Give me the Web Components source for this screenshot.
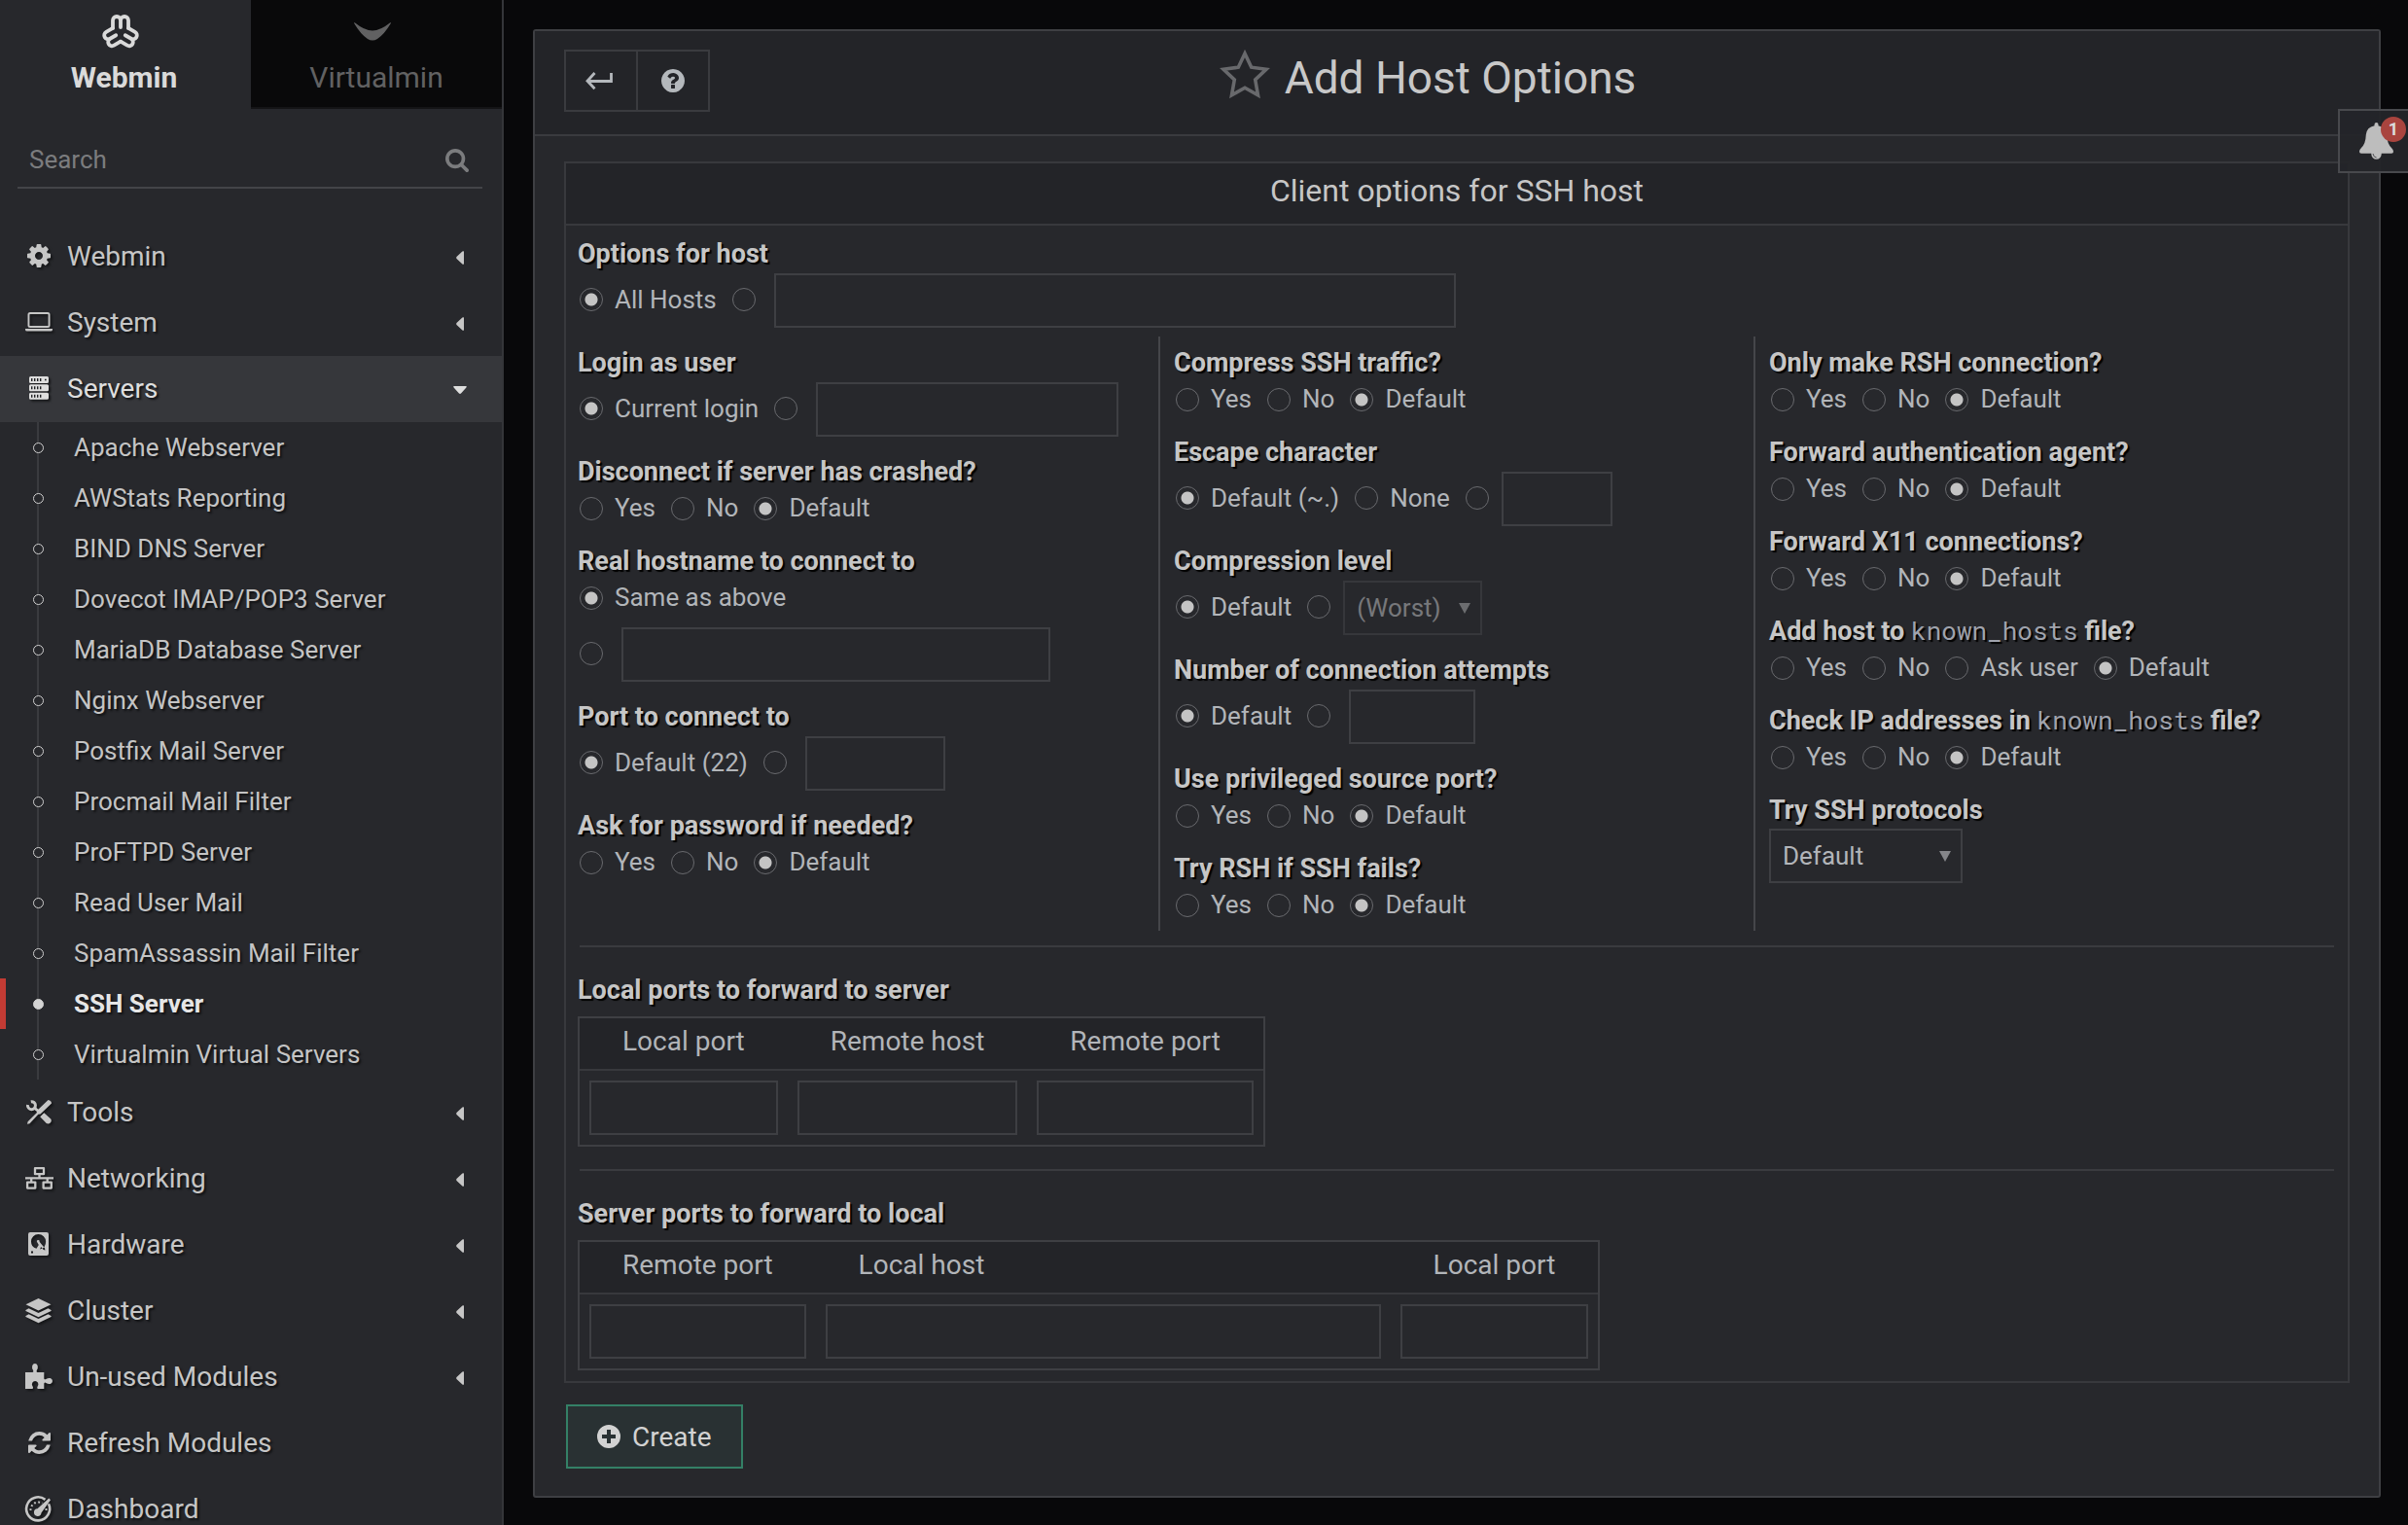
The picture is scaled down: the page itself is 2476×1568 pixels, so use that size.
<!DOCTYPE html>
<html lang="en">
<head>
<meta charset="utf-8">
<title>Add Host Options</title>
<style>
  html, body { margin: 0; height: 100%; background: #08080a; }
  body { font: 26px/37px Roboto, "Liberation Sans", sans-serif; color: #b2b5b9; }
</style>
</head>
<body>
<wm-app></wm-app>
<script>
const ICONS = {
  webmin: ['-18 -18.5 36 34', '<g fill="none" stroke="currentColor" stroke-width="3.8" stroke-linecap="round" stroke-linejoin="round"><path d="M-8-4.600V-12.500a4 4 0 0 1 8 0V-5.500M0-12.500a4 4 0 0 1 8 0V-4.600"/><path transform="rotate(120)" d="M-8-4.600V-12.500a4 4 0 0 1 8 0V-5.500M0-12.500a4 4 0 0 1 8 0V-4.600"/><path transform="rotate(-120)" d="M-8-4.600V-12.500a4 4 0 0 1 8 0V-5.500M0-12.500a4 4 0 0 1 8 0V-4.600"/></g>'],
  virtualmin: ['0 0 38 20', '<path d="M.4 0Q11 9 19 9T37.600 0Q38 .3 37.700 1.200 31 13 24 17.800 19 21 14 17.800 7 13 .3 1.200 0 .3.4 0z"/>'],
  search: ['64 128 1664 1664', '<path d="M1216 832q0-185-131.5-316.5t-316.5-131.5-316.5 131.5-131.5 316.5 131.5 316.5 316.5 131.5 316.5-131.5 131.5-316.5zm512 832q0 52-38 90t-90 38q-54 0-90-38l-343-342q-179 124-399 124-143 0-273.5-55.5t-225-150-150-225-55.5-273.5 55.5-273.5 150-225 225-150 273.5-55.5 273.5 55.5 225 150 150 225 55.5 273.5q0 220-124 399l343 343q37 37 37 90z"/>'],
  cog: ['0 128 1536 1536', '<path d="M1024 896q0-106-75-181t-181-75-181 75-75 181 75 181 181 75 181-75 75-181zm512-109v222q0 12-8 23t-20 13l-185 28q-19 54-39 91 35 50 107 138 10 12 10 25t-9 23q-27 37-99 108t-94 71q-12 0-26-9l-138-108q-44 23-91 38-16 136-29 186-7 28-36 28h-222q-14 0-24.5-8.5t-11.5-21.5l-28-184q-49-16-90-37l-141 107q-10 9-25 9-14 0-25-11-126-114-165-168-7-10-7-23 0-12 8-23 15-21 51-66.5t54-70.5q-27-50-41-99l-183-27q-13-2-21-12.5t-8-23.5v-222q0-12 8-23t19-13l186-28q14-46 39-92-40-57-107-138-10-12-10-24 0-10 9-23 26-36 98.500-107.500t94.500-71.500q13 0 26 10l138 107q44-23 91-38 16-136 29-186 7-28 36-28h222q14 0 24.500 8.500t11.500 21.500l28 184q49 16 90 37l142-107q9-9 24-9 13 0 25 10 129 119 165 170 7 8 7 22 0 12-8 23-15 21-51 66.500t-54 70.500q26 50 41 98l183 28q13 2 21 12.500t8 23.500z"/>'],
  laptop: ['0 0 28 20', '<path fill-rule="evenodd" d="M5 0h18a2.500 2.500 0 0 1 2.500 2.500v11a2.500 2.500 0 0 1-2.500 2.500H5a2.500 2.500 0 0 1-2.500-2.500v-11A2.500 2.500 0 0 1 5 0zm0 2a.6.6 0 0 0-.6.6v10.800a.6.6 0 0 0 .6.6h18a.6.6 0 0 0 .6-.6V2.600A.6.6 0 0 0 23 2zM0 17h28v1q0 1.500-2 1.500H2Q0 19.500 0 18z"/>'],
  server: ['0 0 20 24', '<path fill-rule="evenodd" d="M1.500 0h17A1.500 1.500 0 0 1 20 1.500v4A1.500 1.500 0 0 1 18.500 7h-17A1.500 1.500 0 0 1 0 5.500v-4A1.500 1.500 0 0 1 1.500 0zm.500 2v3h1.400V2zm3 0v3h1.400V2zm3 0v3h1.400V2zm3 0v3h1.400V2zm5 .800v1.400h1.600V2.800zM1.500 8.300h17A1.500 1.500 0 0 1 20 9.800v4a1.500 1.500 0 0 1-1.500 1.500h-17A1.500 1.500 0 0 1 0 13.800v-4a1.500 1.500 0 0 1 1.500-1.500zm.500 2v3h1.400v-3zm3 0v3h1.400v-3zm3 0v3h1.400v-3zm3 0v3h1.400v-3zM1.500 16.700h17a1.500 1.500 0 0 1 1.500 1.500v4a1.500 1.500 0 0 1-1.500 1.500h-17A1.500 1.500 0 0 1 0 22.200v-4a1.500 1.500 0 0 1 1.500-1.500zm.500 2v3h1.400v-3zm3 0v3h1.400v-3zm3 0v3h1.400v-3zm3 0v3h1.400v-3z"/>'],
  tools: ['0 0 26 25', '<path d="M22.500 0Q26 .5 26 3.500L14.500 14.500 12.300 14.800 3.500 24.200 1 24.800 1.600 22.300 10.700 13.300 11 11z"/><path fill="none" stroke="currentColor" stroke-width="3" d="M4.800 1.700a4 4 0 1 1-3.300 3.300"/><path d="M8.500 6.500 13 10 11 12 7 9zM18.300 13.200l7 6.300q1.200 2.200-.6 3.900-1.800 1.700-4 .5l-6.500-6.700z"/>'],
  network: ['0 0 29 23', '<path fill="none" stroke="currentColor" stroke-width="2.300" stroke-linejoin="round" d="M10 1.200h9v6h-9zM2.100 15.600h8.200v6H2.100zM18.600 15.600h8.200v6h-8.200zM0 11.300h29M14.500 7.500v4M6.200 11.500v4M22.700 11.500v4"/>'],
  disk: ['-1 0 25 24', '<path fill-rule="evenodd" d="M2 0h17a2 2 0 0 1 2 2v20a2 2 0 0 1-2 2H2a2 2 0 0 1-2-2V2a2 2 0 0 1 2-2zm8.500 2A7.400 7.400 0 0 0 3 9.500q0 6 5.500 7.200l2.300-3.700-1.600-2.800a1.400 1.400 0 1 1 2.400-.5l1.800 2.300 3.600 4.200.4 2.300-1.700-.4-2.600-3-1 2.300q6.200-1.400 6-7.900A7.600 7.600 0 0 0 10.500 2zM3 19.500v2h2v-2z"/>'],
  layers: ['0 0 28 25', '<path d="M13.500 0 26.500 6.300 13.500 12.600.5 6.300zM3.500 10.200l10 4.900 10-4.900 3 1.900q.4.500 0 .9L13.500 19.300.5 13q-.4-.4 0-.9zM3.500 16.200l10 4.700 10-4.700 3 1.900q.4.500 0 .9L13.500 25.200.5 19q-.4-.4 0-.9z"/>'],
  puzzle: ['0 0 29 26', '<path d="M0 9h7.800q1.400-.7.6-2.100Q6.800 4.500 7.400 2.300 8.300 0 10.300 0t2.900 2.300q.6 2.200-1 4.600-.8 1.400.6 2.100H20v6.400q.7 1.400 2.100.6 2.400-1.500 4.600-.9Q29 16 29 18t-2.300 2.900q-2.200.6-4.600-1-1.400-.8-2.100.6V26h-6.700q-1.200-.8-.3-2.300 1.500-1.900.5-3.900-1-1.800-3-1.800t-3 1.800q-1 2 .5 3.900.9 1.500-.3 2.300H0z"/>'],
  refresh: ['128 128 1536 1536', '<path d="M1639 1056q0 5-1 7-64 268-268 434.500t-478 166.500q-146 0-282.500-55t-243.500-157l-129 129q-19 19-45 19t-45-19-19-45v-448q0-26 19-45t45-19h448q26 0 45 19t19 45-19 45l-137 137q71 66 161 102t187 36q134 0 250-65t186-179q11-17 53-117 8-23 30-23h192q13 0 22.500 9.500t9.500 22.500zm25-800v448q0 26-19 45t-45 19h-448q-26 0-45-19t-19-45 19-45l138-138q-148-137-349-137-134 0-250 65t-186 179q-11 17-53 117-8 23-30 23h-199q-13 0-22.500-9.500t-9.500-22.500v-7q65-268 270-434.500t480-166.500q146 0 284 55.500t245 156.500l130-129q19-19 45-19t45 19 19 45z"/>'],
  gauge: ['0 0 28 27', '<path d="M20.500 3.900A12 12 0 1 0 24 8.300" fill="none" stroke="currentColor" stroke-width="2.600"/><path d="M24.300 2.600 26 4.200 16.500 17.500a3.800 3.800 0 1 1-4-4.200z"/><path fill="none" stroke="currentColor" stroke-width="2" stroke-dasharray="1.800 2.400" d="M5.500 15a8 8 0 0 1 12-7.400"/><path d="M20.500 13h2v2h-2z"/>'],
  back: ['0 0 28 18', '<path fill="none" stroke="currentColor" stroke-width="2.800" d="M26.500 1v8.500H2.500M9.500 1 2 9.300l7.500 8"/>'],
  help: ['128 128 1536 1536', '<path d="M1024 1376v-192q0-14-9-23t-23-9h-192q-14 0-23 9t-9 23v192q0 14 9 23t23 9h192q14 0 23-9t9-23zm256-672q0-88-55.500-163t-138.500-116-170-41q-243 0-371 213-15 24 8 42l132 100q7 6 19 6 16 0 25-12 53-68 86-92 34-24 86-24 48 0 85.500 26t37.500 59q0 38-20 61t-68 45q-63 28-115.500 86.500t-52.500 125.500v36q0 14 9 23t23 9h192q14 0 23-9t9-23q0-19 21.500-49.500t54.500-49.500q32-18 49-28.500t46-35 44.500-48 28-60.500 12.500-81zm384 192q0 209-103 385.500t-279.500 279.500-385.500 103-385.500-103-279.500-279.500-103-385.500 103-385.500 279.500-279.500 385.500-103 385.500 103 279.500 279.500 103 385.500z"/>'],
  star: ['0 0 52 50', '<path fill="none" stroke="currentColor" stroke-width="3.600" d="M26 4l6.700 14.200 15.300 2L36.700 31l2.800 15.800L26 39.300l-13.500 7.500L15.300 31 4 20.200l15.300-2z"/>'],
  plus: ['0 0 24 24', '<path fill-rule="evenodd" d="M12 0a12 12 0 1 1 0 24 12 12 0 0 1 0-24zm-2 5v5H5v4h5v5h4v-5h5v-4h-5V5z"/>'],
  bell: ['0 0 35 38', '<path d="M17.500 0q2 0 2 2v1.200q8 1.600 8.700 9.300.3 9.500 5 13.700 1.800 1.600 1.800 3.800 0 1.800-2 1.800H2Q0 31.800 0 30q0-2.200 1.800-3.800 4.700-4.200 5-13.700.7-7.700 8.700-9.300V2q0-2 2-2z"/><path d="M12.300 31h10.400v1.500a5.200 5.200 0 0 1-10.400 0z"/><path d="M14 32q.4 3.600 3.600 4" fill="none" stroke="#55565a"/>'],
  left: ['0 0 8 14', '<path d="M8 .600v12.800q-.8.800-1.600 0L.5 8Q-.3 7 .5 6L6.400.6Q7.200-.2 8 .6z"/>'],
  down: ['0 0 14 8', '<path d="M.6 0h12.800q.8.800 0 1.600L8 7.500q-1 .8-2 0L.6 1.600Q-.2.800.6 0z"/>'],
  tri: ['0 0 12 11', '<path d="M0 0h12L6 11z"/>']
};

class Base extends HTMLElement {
  connectedCallback() {
    if (this.shadowRoot) return;
    const t = document.createElement('template');
    t.innerHTML = '<style>*{box-sizing:border-box}:host{display:block}' + this.css() + '</style>' + this.html();
    this.attachShadow({ mode: 'open' }).append(t.content.cloneNode(true));
  }
  css() { return ''; }
  html() { return '<slot></slot>'; }
  a(name, fallback = '') { return this.getAttribute(name) ?? fallback; }
}
const def = (name, css, html) => customElements.define(name, class extends Base {
  css() { return typeof css === 'function' ? css(this) : css; }
  html() { return typeof html === 'function' ? html(this) : html || '<slot></slot>'; }
});

def('wm-icon', e => `:host{display:block;flex:none;width:${e.a('w')}px;height:${e.a('h')}px}svg{display:block;width:100%;height:100%;fill:currentColor;overflow:visible}`,
  e => `<svg viewBox="${ICONS[e.a('name')][0]}" preserveAspectRatio="none" aria-hidden="true">${ICONS[e.a('name')][1]}</svg>`);

def('wm-tab', `:host{flex:1}
  a{display:flex;flex-direction:column;align-items:center;height:112px;background:#09090a;border-bottom:2px solid #141416;font-size:30px;line-height:36px;text-decoration:none;color:#616162}
  :host([active]) a{padding-right:3px;background:none;border-color:transparent;color:#dadada;font-weight:700}
  .i{display:flex;align-items:center;height:36px;margin:14px 8px 12px 0}`,
  e => `<a href="#"><span class="i"><slot name="icon"></slot></span><slot></slot></a>`);

def('wm-search', `:host{padding:30px 20px 36px 18px}
  label{display:flex;align-items:center;height:52px;padding:0 14px 5px 12px;border-bottom:2px solid #434448;color:#7b7c7e}
  input{flex:1;min-width:0;font:inherit;color:#b2b5b9;background:none;border:0;outline:0;padding:0;height:37px}
  input::placeholder{color:#7b7c7e;opacity:1}`,
  `<label><input type="search" placeholder="Search" aria-label="Search"><wm-icon name="search" w="24" h="24"></wm-icon></label>`);

def('wm-nav', `a{display:flex;align-items:center;height:68px;padding:0 36px 2px 0;font-size:28px;color:#c6c6c6;text-decoration:none;text-shadow:2px 2px 2px #111214}
  .i{display:flex;justify-content:center;width:28px;margin:0 15px 0 26px}
  .i wm-icon{filter:drop-shadow(2px 2px 1px #151618)}
  .t{flex:1}
  .c{display:flex;justify-content:center;width:14px;padding-top:4px}
  :host([open]) a{background:#36373b;color:#dedede}`,
  e => `<a href="#"><span class="i"><wm-icon name="${e.a('icon')}" w="${e.a('w', 24)}" h="${e.a('h', 24)}"></wm-icon></span><span class="t"><slot></slot></span>
  <span class="c">${e.hasAttribute('leaf') ? '' : e.hasAttribute('open') ? '<wm-icon name="down" w="14" h="8"></wm-icon>' : '<wm-icon name="left" w="8" h="14"></wm-icon>'}</span></a>`);

def('wm-sub', `a{display:flex;align-items:center;height:52px;border-left:6px solid transparent;color:#c4c4c4;text-decoration:none;text-shadow:2px 2px 2px #111214}
  .d{display:flex;align-items:center;justify-content:center;width:10px;height:52px;margin:0 32px 0 28px;background:linear-gradient(#3a3b3f,#3a3b3f) center/2px 100% no-repeat}
  .d i{flex:none;width:11px;height:11px;border:1px solid #d0d0d0;border-radius:50%;background:#27282c}
  :host([active]) a{border-color:#c23b34;color:#e6e6e6;font-weight:700}
  :host([active]) i{background:#d4d4d4}`,
  `<a href="#"><span class="d"><i></i></span><slot></slot></a>`);

def('wm-sidebar', `:host{flex:none;width:518px;background:#27282c;border-right:2px solid #343539;overflow:hidden}
  .tabs{display:flex}`,
  `<div class="tabs">
    <wm-tab active><wm-icon slot="icon" name="webmin" w="36" h="34"></wm-icon>Webmin</wm-tab>
    <wm-tab><wm-icon slot="icon" name="virtualmin" w="38" h="19"></wm-icon>Virtualmin</wm-tab>
  </div>
  <wm-search></wm-search>
  <nav>
    <wm-nav icon="cog">Webmin</wm-nav>
    <wm-nav icon="laptop" w="28" h="20">System</wm-nav>
    <wm-nav icon="server" w="20" h="24" open>Servers</wm-nav>
    ${['Apache Webserver', 'AWStats Reporting', 'BIND DNS Server', 'Dovecot IMAP/POP3 Server', 'MariaDB Database Server', 'Nginx Webserver', 'Postfix Mail Server', 'Procmail Mail Filter', 'ProFTPD Server', 'Read User Mail', 'SpamAssassin Mail Filter', 'SSH Server', 'Virtualmin Virtual Servers'].map(n => `<wm-sub${n === 'SSH Server' ? ' active' : ''}>${n}</wm-sub>`).join('')}
    <wm-nav icon="tools" w="26" h="25">Tools</wm-nav>
    <wm-nav icon="network" w="29" h="23">Networking</wm-nav>
    <wm-nav icon="disk" w="25" h="24">Hardware</wm-nav>
    <wm-nav icon="layers" w="28" h="25">Cluster</wm-nav>
    <wm-nav icon="puzzle" w="28" h="26">Un-used Modules</wm-nav>
    <wm-nav icon="refresh" w="23" h="23" leaf>Refresh Modules</wm-nav>
    <wm-nav icon="gauge" w="28" h="27" leaf>Dashboard</wm-nav>
  </nav>`);

/* Without a width of its own the box fills its cell and adds nothing to the column. */
def('wm-input', e => `:host{display:block;flex:none;${e.a('w') ? `width:${e.a('w')}px` : 'width:0;min-width:100%'}}
  input{display:block;width:100%;height:56px;padding:0 12px;font:inherit;color:#b2b5b9;background:none;border:2px solid #3e3f43;border-radius:0;outline:0}`,
  e => `<input type="text" aria-label="${e.a('label')}">`);

def('wm-select', e => `:host{display:grid;flex:none;width:${e.a('w')}px}
  select{grid-area:1/1;appearance:none;width:100%;height:56px;padding:0 12px;font:inherit;color:#b2b5b9;background:none;border:2px solid #3e3f43;border-radius:0;outline:0;opacity:1}
  wm-icon{grid-area:1/1;align-self:center;justify-self:end;margin-right:12px;color:#85868a;pointer-events:none}
  select:disabled{color:#77787b;border-color:#36373b}
  :host([off]) wm-icon{color:#6c6d70}`,
  e => `<select aria-label="${e.a('label')}"${e.hasAttribute('off') ? ' disabled' : ''}><option>${e.a('value')}</option></select><wm-icon name="tri" w="12" h="11"></wm-icon>`);

/* Options are listed as "Yes|No|*Default"; the star marks the chosen one, an empty entry is a bare button for the slotted control. */
def('wm-choice', `:host{display:flex;align-items:center;min-height:37px}
  :host([box]){padding-top:1px}
  :host([box]) label{padding-bottom:2px}
  :host([gap]){margin-top:11px}
  label{display:flex;align-items:center;gap:12px;margin-left:16px;white-space:nowrap}
  label:first-of-type{margin-left:2px}
  input{appearance:none;flex:none;width:24px;height:24px;margin:0;border:1px solid #696a6e;border-radius:50%;outline:0}
  input:checked{background:radial-gradient(circle,#c4c4c4 6px,transparent 7px)}
  .end{margin-left:19px}
  :host([near]) .end{margin-left:13px}`,
  e => e.a('options').split('|').map(o => {
    const on = o[0] === '*', t = on ? o.slice(1) : o;
    return `<label><input type="radio" name="r"${on ? ' checked' : ''}${t ? '' : ' aria-label="Custom value"'}>${t ? `<span>${t}</span>` : ''}</label>`;
  }).join('') + (e.children.length ? '<span class="end"><slot></slot></span>' : ''));

def('wm-field', `fieldset{margin:0 0 18px;padding:0;border:0;min-width:0}
  legend{display:block;padding:0;height:37px;font-size:27px;font-weight:700;color:#c6c6c6;text-shadow:2px 2px 1px #000;white-space:nowrap}
  ::slotted(code){font:400 26px "Roboto Mono","DejaVu Sans Mono",monospace;color:#a0a3ad}`,
  `<fieldset><legend><slot name="label"></slot></legend><slot></slot></fieldset>`);

def('wm-ports', `:host{margin:0 12px 0}
  h3{margin:0 0 8px;font-size:27px;line-height:37px;font-weight:700;color:#c6c6c6;text-shadow:2px 2px 1px #000}
  table{border-collapse:separate;border-spacing:0;border:2px solid #3e3f43}
  th{height:54px;padding:0 44px 4px;font-size:28px;line-height:40px;font-weight:400;text-align:left;background:#232428;border-bottom:2px solid #38393d;white-space:nowrap}
  td{padding:10px}`,
  e => { const c = e.a('cols').split('|').map(s => s.split(':'));
    return `<h3>${e.a('heading')}</h3><table><thead><tr>${c.map(x => `<th scope="col">${x[0]}</th>`).join('')}</tr></thead><tbody><tr>${c.map(x => `<td><wm-input label="${x[0]}"${x[1] ? ` w="${x[1]}"` : ''}></wm-input></td>`).join('')}</tr></tbody></table>`; });

def('wm-form', `:host{border:2px solid #38393d}
  h2{margin:0;height:64px;font-size:32px;line-height:56px;font-weight:400;text-align:center;color:#c6c6c6;background:#232428;border-bottom:2px solid #38393d}
  .top{padding:11px 12px 0}
  .top wm-field{display:block;margin-bottom:-9px}
  .cols{display:grid;grid-template-columns:609fr 612fr 611fr}
  .col{padding:9px 0 0 14px;border-left:2px solid #45464a}
  .col:first-child{border:0;padding-left:12px}
  .col wm-field:last-child{margin-bottom:-10px}
  hr{height:2px;margin:15px 14px 26px;border:0;background:#3a3b3f}
  .mid{margin-top:23px}
  wm-ports:last-child{margin-bottom:11px}`,
  `<h2>Client options for SSH host</h2>
  <div class="top"><wm-field><span slot="label">Options for host</span><wm-choice box options="*All Hosts|"><wm-input w="701" label="Host"></wm-input></wm-choice></wm-field></div>
  <div class="cols">
    <div class="col">
      <wm-field><span slot="label">Login as user</span><wm-choice box options="*Current login|"><wm-input w="311" label="User"></wm-input></wm-choice></wm-field>
      <wm-field><span slot="label">Disconnect if server has crashed?</span><wm-choice options="Yes|No|*Default"></wm-choice></wm-field>
      <wm-field><span slot="label">Real hostname to connect to</span><wm-choice options="*Same as above"></wm-choice><wm-choice box gap options=""><wm-input w="441" label="Real hostname"></wm-input></wm-choice></wm-field>
      <wm-field><span slot="label">Port to connect to</span><wm-choice box options="*Default (22)|"><wm-input w="144" label="Port"></wm-input></wm-choice></wm-field>
      <wm-field><span slot="label">Ask for password if needed?</span><wm-choice options="Yes|No|*Default"></wm-choice></wm-field>
    </div>
    <div class="col">
      <wm-field><span slot="label">Compress SSH traffic?</span><wm-choice options="Yes|No|*Default"></wm-choice></wm-field>
      <wm-field><span slot="label">Escape character</span><wm-choice box near options="*Default (~.)|None|"><wm-input w="114" label="Escape character"></wm-input></wm-choice></wm-field>
      <wm-field><span slot="label">Compression level</span><wm-choice box near options="*Default|"><wm-select off w="143" label="Compression level" value="(Worst)"></wm-select></wm-choice></wm-field>
      <wm-field><span slot="label">Number of connection attempts</span><wm-choice box options="*Default|"><wm-input w="130" label="Attempts"></wm-input></wm-choice></wm-field>
      <wm-field><span slot="label">Use privileged source port?</span><wm-choice options="Yes|No|*Default"></wm-choice></wm-field>
      <wm-field><span slot="label">Try RSH if SSH fails?</span><wm-choice options="Yes|No|*Default"></wm-choice></wm-field>
    </div>
    <div class="col">
      <wm-field><span slot="label">Only make RSH connection?</span><wm-choice options="Yes|No|*Default"></wm-choice></wm-field>
      <wm-field><span slot="label">Forward authentication agent?</span><wm-choice options="Yes|No|*Default"></wm-choice></wm-field>
      <wm-field><span slot="label">Forward X11 connections?</span><wm-choice options="Yes|No|*Default"></wm-choice></wm-field>
      <wm-field><span slot="label">Add host to </span><code slot="label">known_hosts</code><span slot="label"> file?</span><wm-choice options="Yes|No|Ask user|*Default"></wm-choice></wm-field>
      <wm-field><span slot="label">Check IP addresses in </span><code slot="label">known_hosts</code><span slot="label"> file?</span><wm-choice options="Yes|No|*Default"></wm-choice></wm-field>
      <wm-field><span slot="label">Try SSH protocols</span><wm-select w="199" label="Try SSH protocols" value="Default"></wm-select></wm-field>
    </div>
  </div>
  <hr>
  <wm-ports heading="Local ports to forward to server" cols="Local port|Remote host|Remote port"></wm-ports>
  <hr class="mid">
  <wm-ports heading="Server ports to forward to local" cols="Remote port|Local host:571|Local port"></wm-ports>`);

def('wm-panel', `:host{background:#27282c;border:2px solid #3e3f43;border-radius:3px}
  header{display:grid;grid-template-columns:150px 1fr 210px;align-items:start;height:108px;padding:19px 30px 0;background:#232428;border-bottom:2px solid #3a3b3f}
  .group{display:flex}
  .group button{display:flex;align-items:center;justify-content:center;width:76px;height:64px;padding:0;color:#b4b8bc;background:none;border:2px solid #3a3b3f}
  .group button:first-child{padding-right:4px}
  .group button + button{margin-left:-2px}
  h1{display:flex;justify-content:center;gap:15px;margin:0;font-size:46px;line-height:58px;font-weight:400;color:#c8c8c8}
  h1 wm-icon{color:#68696c}
  main{padding:26px 30px 28px}
  .create{display:flex;align-items:center;gap:12px;height:66px;margin:22px 0 0 2px;padding:0 30px;font:28px Roboto,"Liberation Sans",sans-serif;color:#d2d2d2;background:#293133;border:2px solid #348066}`,
  `<header>
    <div class="group"><button type="button" aria-label="Back"><wm-icon name="back" w="28" h="18"></wm-icon></button><button type="button" aria-label="Help"><wm-icon name="help" w="24" h="24"></wm-icon></button></div>
    <h1><wm-icon name="star" w="52" h="50"></wm-icon><span>Add Host Options</span></h1>
  </header>
  <main><wm-form></wm-form><button class="create" type="submit"><wm-icon name="plus" w="24" h="24"></wm-icon>Create</button></main>`);

def('wm-bell', `:host{position:absolute;top:112px;right:0}
  button{display:flex;align-items:flex-start;width:72px;height:66px;padding:12px 0 0 20px;color:#bdbdbd;background:#242529f2;border:2px solid #48494d;border-right:0}
  b{position:absolute;top:8px;left:44px;width:26px;height:26px;border-radius:50%;background:#a9443e;color:#dcdcdc;font:700 18px/26px Roboto,sans-serif;text-align:center}`,
  `<button type="button" aria-label="Notifications"><wm-icon name="bell" w="35" h="38"></wm-icon><b>1</b></button>`);

def('wm-app', `:host{display:flex;height:100vh;overflow:hidden;position:relative}
  .area{flex:1;min-width:0;padding:30px 28px 28px 30px;overflow:hidden}`,
  `<wm-sidebar></wm-sidebar><div class="area"><wm-panel></wm-panel></div><wm-bell></wm-bell>`);
</script>
</body>
</html>
